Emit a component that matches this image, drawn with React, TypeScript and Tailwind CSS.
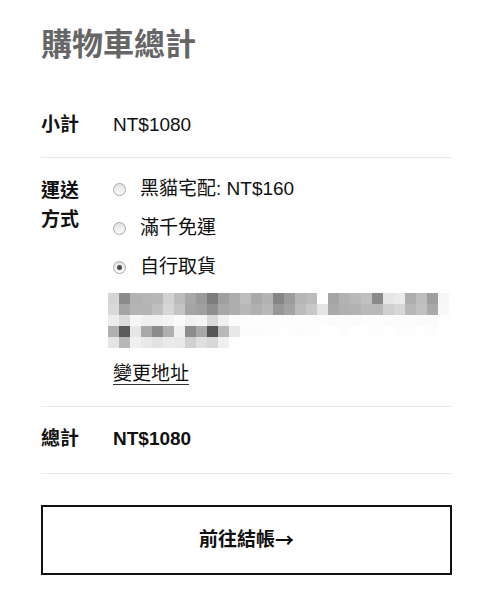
import React from "react";

const rows: string[][] = [
  ["d5","8c","b2","b5","b8","d2","bc","a8","9a","7c","a0","ad","bd","a9","b3","85","9c","b6","bc","ff","a6","b3","b9","c0","8a","e6","eb","ad","bd","9e","f6"],
  ["d9","a5","b4","b4","c0","d6","c4","a4","a0","8f","a8","ae","b8","b0","b8","97","a3","bc","c8","e4","a9","b0","b2","b9","b8","cf","d6","b7","c1","a9","f8"],
  ["ec","dc","f6","f0","f0","f3","fa","f0","f4","da","f0","fc","fd","fd","fd","fc","fd","fd","fc","fc","fb","fb","fb","fc","fd","fb","fb","fc","fb","fb","fe"],
  ["b0","5a","e6","a8","8c","b0","ef","8c","a8","55","b8","e8","fc","fc","fd","fe","fe","fc","fd","fe","fe","fc","fe","fe","fd","fe","fc","fd","fe","fd","ff"],
  ["e4","b8","f0","e8","e2","ea","e8","d0","e0","d8","ef","ff","ff","ff","ff","ff","ff","ff","ff","ff","ff","ff","ff","ff","ff","ff","ff","ff","ff","ff","ff"],
];

function Mosaic() {
  const s = 11;
  return (
    <svg width={31 * s} height={5 * s} viewBox={`0 0 ${31 * s} ${5 * s}`} className="block">
      {rows.map((r, y) =>
        r.map((c, x) => (
          <rect key={`${x}-${y}`} x={x * s} y={y * s} width={s} height={s} fill={`#${c}${c}${c}`} />
        ))
      )}
    </svg>
  );
}

function Radio({ checked }: { checked?: boolean }) {
  return (
    <span className="relative inline-flex h-[13px] w-[13px] shrink-0 items-center justify-center rounded-full border border-[#a9a9a9] bg-gradient-to-b from-[#e2e2e2] to-[#fbfbfb]">
      {checked && <span className="h-[5px] w-[5px] rounded-full bg-[#4a4a4a]" />}
    </span>
  );
}

export default function App() {
  return (
    <div
      className="min-h-[600px] w-[478px] bg-white pl-[41px] pr-[27px] pt-[25px] text-[#111]"
      style={{ fontFamily: '"Liberation Sans", "Noto Sans CJK TC", sans-serif' }}
    >
      <h1 className="text-[31px] font-bold leading-[40px] text-[#666]">購物車總計</h1>

      <div className="mt-[45px] flex border-b border-[#e8e8e8] pb-[17px]">
        <div className="w-[72px] text-[19px] font-bold leading-[30px]">小計</div>
        <div className="text-[19px] leading-[30px]">NT$1080</div>
      </div>

      <div className="flex border-b border-[#e8e8e8] pb-[19px] pt-[16px]">
        <div className="w-[72px] pt-[2px] text-[19px] font-bold leading-[29px]">
          運送
          <br />
          方式
        </div>
        <div className="flex-1">
          <div className="flex flex-col gap-[9px]">
            <label className="flex items-center gap-[14px] text-[19px] leading-[30px]">
              <Radio />
              <span>黑貓宅配: NT$160</span>
            </label>
            <label className="flex items-center gap-[14px] text-[19px] leading-[30px]">
              <Radio />
              <span>滿千免運</span>
            </label>
            <label className="flex items-center gap-[14px] text-[19px] leading-[30px]">
              <Radio checked />
              <span>自行取貨</span>
            </label>
          </div>
          <div className="-ml-[5px] mt-[11px]">
            <Mosaic />
          </div>
          <div className="mt-[13px]">
            <span className="border-b border-[#333] text-[19px] leading-[26px]">變更地址</span>
          </div>
        </div>
      </div>

      <div className="flex border-b border-[#e8e8e8] pb-[19px] pt-[17px]">
        <div className="w-[72px] text-[19px] font-bold leading-[30px]">總計</div>
        <div className="text-[19px] font-bold leading-[30px]">NT$1080</div>
      </div>

      <button className="mt-[31px] flex h-[70px] w-[411px] items-center justify-center border-2 border-[#111] bg-white text-[19px] font-bold text-[#111]">
        前往結帳<span style={{ fontFamily: '"Noto Sans CJK TC", sans-serif' }}>→</span>
      </button>
    </div>
  );
}
